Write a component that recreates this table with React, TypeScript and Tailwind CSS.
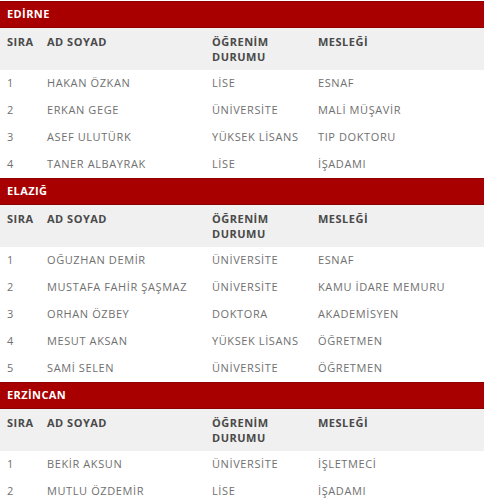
import React from "react";

type Row = [string, string, string, string];
const sections: { title: string; rows: Row[] }[] = [
  {
    title: "EDİRNE",
    rows: [
      ["1", "HAKAN ÖZKAN", "LİSE", "ESNAF"],
      ["2", "ERKAN GEGE", "ÜNİVERSİTE", "MALİ MÜŞAVİR"],
      ["3", "ASEF ULUTÜRK", "YÜKSEK LİSANS", "TIP DOKTORU"],
      ["4", "TANER ALBAYRAK", "LİSE", "İŞADAMI"],
    ],
  },
  {
    title: "ELAZIĞ",
    rows: [
      ["1", "OĞUZHAN DEMİR", "ÜNİVERSİTE", "ESNAF"],
      ["2", "MUSTAFA FAHİR ŞAŞMAZ", "ÜNİVERSİTE", "KAMU İDARE MEMURU"],
      ["3", "ORHAN ÖZBEY", "DOKTORA", "AKADEMİSYEN"],
      ["4", "MESUT AKSAN", "YÜKSEK LİSANS", "ÖĞRETMEN"],
      ["5", "SAMİ SELEN", "ÜNİVERSİTE", "ÖĞRETMEN"],
    ],
  },
  {
    title: "ERZİNCAN",
    rows: [
      ["1", "BEKİR AKSUN", "ÜNİVERSİTE", "İŞLETMECİ"],
      ["2", "MUTLU ÖZDEMİR", "LİSE", "İŞADAMI"],
    ],
  },
];

const cols = "grid grid-cols-[40px_165px_106px_1fr]";

export default function App() {
  return (
    <div
      className="w-[484px] h-[500px] overflow-hidden bg-white pt-px"
      style={{ fontFamily: '"Open Sans", "DejaVu Sans", sans-serif' }}
    >
      {sections.map((s) => (
        <div key={s.title}>
          <div className="h-[27px] bg-[#a80000] border-y border-[#8e0000] flex items-center px-[7px] text-white text-[11px] font-bold tracking-[0.4px]">
            {s.title}
          </div>
          <div className={`${cols} bg-[#f0f0f0] h-[42px] pt-[6px] px-[7px] text-[11px] leading-[15px] font-bold text-[#4a4a4a] tracking-[0.5px]`}>
            <div>SIRA</div>
            <div>AD SOYAD</div>
            <div>
              ÖĞRENİM
              <br />
              DURUMU
            </div>
            <div>MESLEĞİ</div>
          </div>
          {s.rows.map((r) => (
            <div
              key={r[0]}
              className={`${cols} h-[27px] items-center px-[7px] text-[11px] font-medium text-[#707070] tracking-[0.6px]`}
            >
              {r.map((c, i) => (
                <div key={i} className="whitespace-nowrap">
                  {c}
                </div>
              ))}
            </div>
          ))}
        </div>
      ))}
    </div>
  );
}
